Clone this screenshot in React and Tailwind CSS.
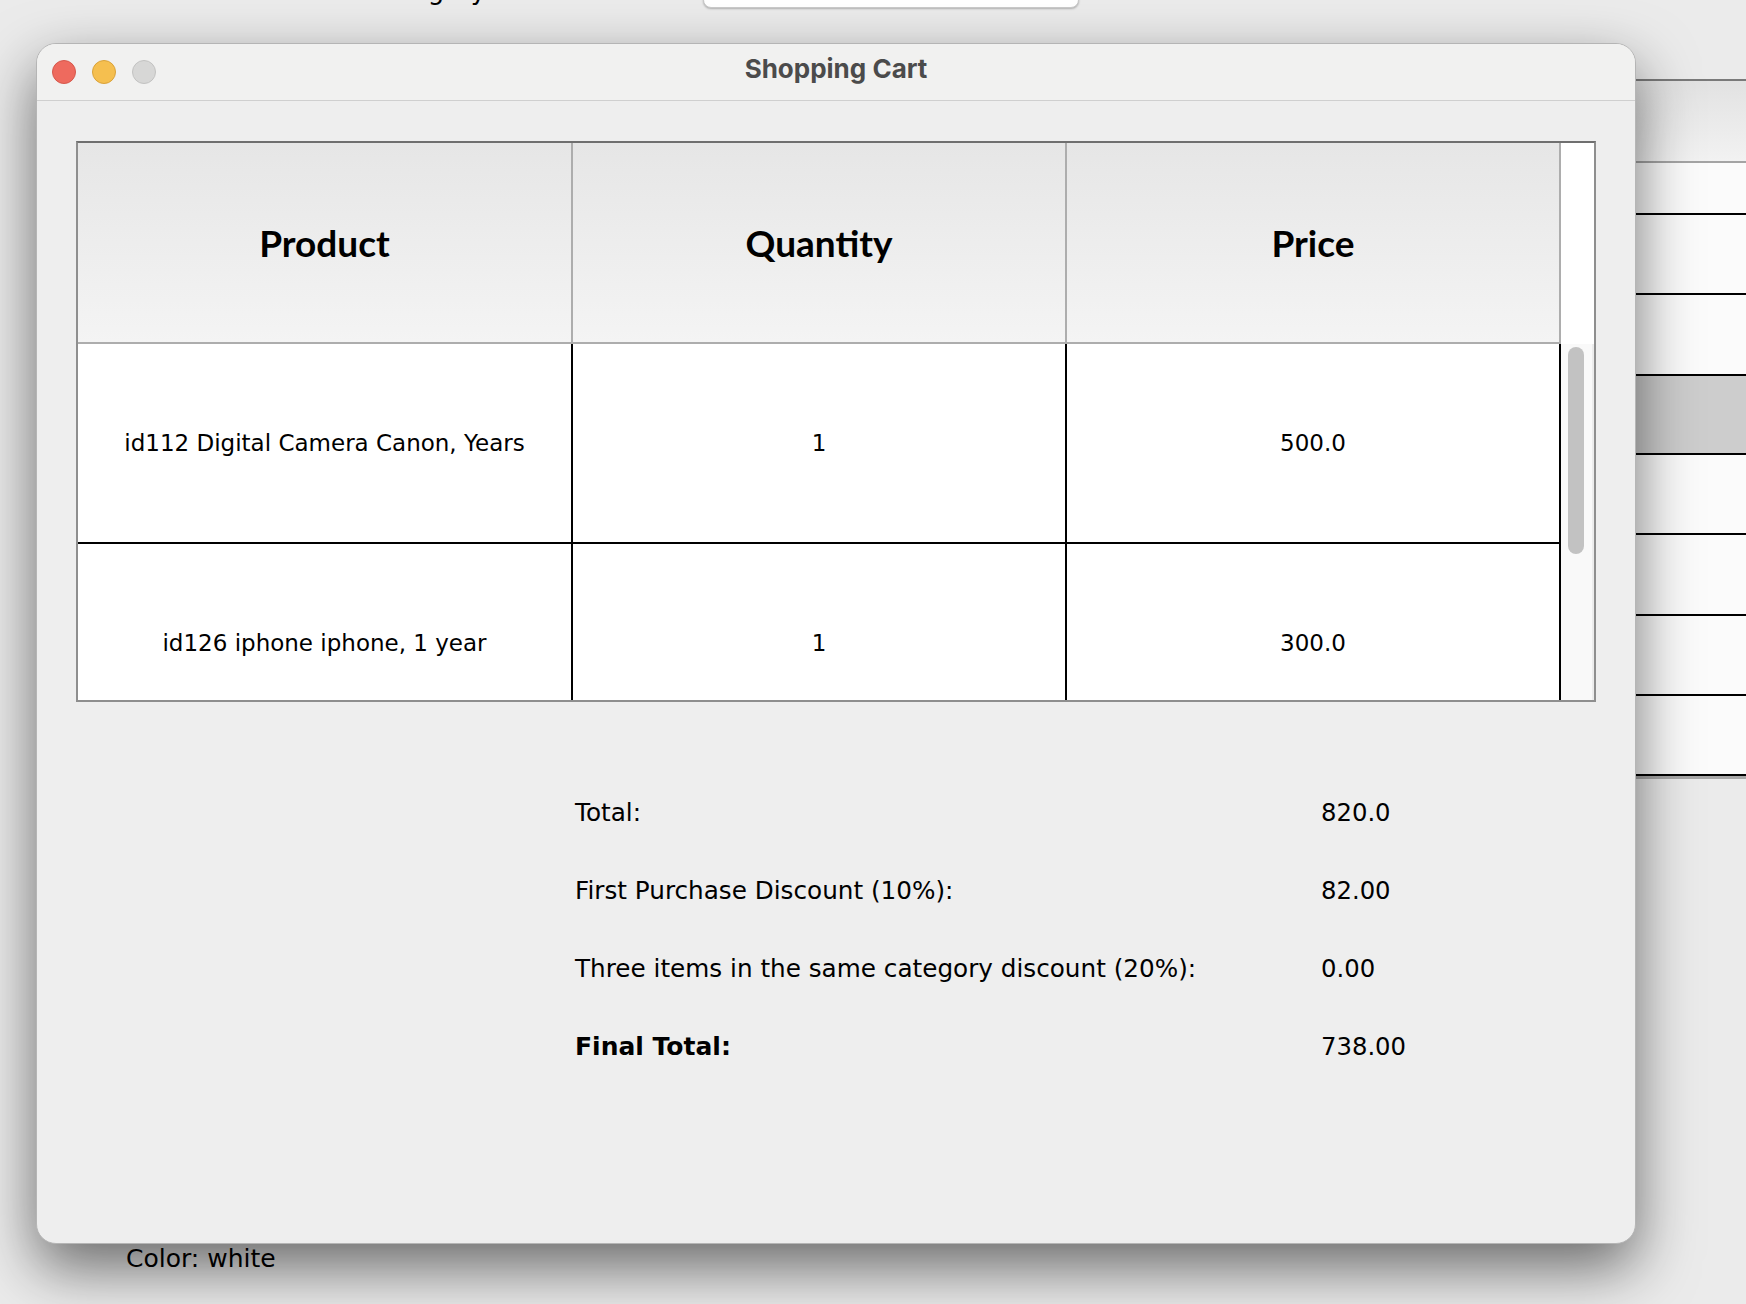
import React from 'react';

const cartRows = [
  { product: 'id112 Digital Camera Canon, Years', qty: '1', price: '500.0' },
  { product: 'id126 iphone iphone, 1 year', qty: '1', price: '300.0' },
];

const summary = [
  { label: 'Total:', value: '820.0' },
  { label: 'First Purchase Discount (10%):', value: '82.00' },
  { label: 'Three items in the same category discount (20%):', value: '0.00' },
  { label: 'Final Total:', value: '738.00', bold: true },
];

// rows of the product list window that sits behind the cart
const backRows = [
  { h: 'h-[52px]' },
  { h: 'h-[80px]' },
  { h: 'h-[81px]' },
  { h: 'h-[79px]', selected: true },
  { h: 'h-[80px]' },
  { h: 'h-[81px]' },
  { h: 'h-[80px]' },
  { h: 'h-[80px]' },
];

const BackWindow = () => (
  <>
    {/* cut off label + field at the very top */}
    <div className="absolute left-[172px] top-[-25px] font-['DejaVu_Sans',sans-serif] text-[26px] leading-[30px] text-black">
      Select Product Category
    </div>
    <div className="absolute left-[703px] top-[-20px] w-[376px] h-[28px] bg-white rounded-b-[8px] border border-[#c9c9c9] shadow-[0_1px_2px_rgba(0,0,0,0.25)]" />

    {/* product list table peeking out on the right */}
    <div className="absolute left-[1480px] top-[79px] w-[300px] flex flex-col">
      <div className="h-[84px] border-t-2 border-b-2 border-t-[#7a7a7a] border-b-[#a4a4a4] bg-gradient-to-b from-[#e2e2e2] to-[#f2f2f2]" />
      {backRows.map((r, i) => (
        <div
          key={i}
          className={`${r.h} border-b-2 border-black ${r.selected ? 'bg-[#cdcdcd]' : 'bg-[#fbfbfb]'}`}
        />
      ))}
      <div className="h-[3px] bg-[#a8a8a8]" />
    </div>

    <div className="absolute left-[126px] top-[1240px] font-['DejaVu_Sans',sans-serif] text-[25px] text-black">
      Color: white
    </div>
  </>
);

const TrafficLights = () => (
  <div className="flex items-center gap-[16px]">
    <div className="w-[24px] h-[24px] rounded-full bg-[#ee6a5e] border border-[#d5584c]" />
    <div className="w-[24px] h-[24px] rounded-full bg-[#f5bf4f] border border-[#d9a23a]" />
    <div className="w-[24px] h-[24px] rounded-full bg-[#d7d7d6] border border-[#c2c2c1]" />
  </div>
);

const CartTable = () => (
  <div className="w-[1520px] h-[561px] border-2 border-[#8e8e8e] border-t-[#6f6f6f] flex flex-col overflow-hidden">
    {/* header */}
    <div className="flex h-[201px] shrink-0">
      {['Product', 'Quantity', 'Price'].map((h, i) => (
        <div
          key={h}
          className={`${i === 0 ? 'w-[495px]' : 'w-[494px]'} h-full flex items-center justify-center border-r-2 border-b-2 border-[#adadad] bg-gradient-to-b from-[#e6e6e6] to-[#f4f4f4] font-['Lato',sans-serif] font-bold text-[37px] text-black`}
        >
          {h}
        </div>
      ))}
      <div className="flex-1 bg-white" />
    </div>

    {/* body */}
    <div className="flex flex-1 overflow-hidden">
      <div className="flex flex-col">
        {cartRows.map((r) => (
          <div key={r.product} className="flex h-[200px] shrink-0 bg-white font-['DejaVu_Sans',sans-serif] text-[23px] text-black">
            <div className="w-[495px] flex items-center justify-center border-r-2 border-b-2 border-black">{r.product}</div>
            <div className="w-[494px] flex items-center justify-center border-r-2 border-b-2 border-black">{r.qty}</div>
            <div className="w-[494px] flex items-center justify-center border-r-2 border-b-2 border-black">{r.price}</div>
          </div>
        ))}
      </div>
      <div className="flex-1 bg-[#f9f9f9] border-r-2 border-[#ececec] pl-[7px] pt-[3px]">
        <div className="w-[16px] h-[207px] rounded-full bg-[#c2c2c2]" />
      </div>
    </div>
  </div>
);

const Summary = () => (
  <div className="ml-[499px] mt-[72px] flex flex-col font-['DejaVu_Sans',sans-serif] text-black">
    {summary.map((s) => (
      <div key={s.label} className="flex items-center h-[78px]">
        <div className={`w-[746px] ${s.bold ? 'font-bold text-[25px]' : 'text-[24.7px]'}`}>{s.label}</div>
        <div className="text-[24.3px]">{s.value}</div>
      </div>
    ))}
  </div>
);

export default function App() {
  return (
    <div className="relative w-[1746px] h-[1304px] overflow-hidden bg-[#ebebeb]">
      <BackWindow />

      <div className="absolute left-[36px] top-[43px] w-[1600px] h-[1201px] rounded-[20px] bg-[#eeeeee] border border-[#b5b5b5] shadow-[0_24px_60px_rgba(0,0,0,0.55)] overflow-hidden flex flex-col">
        <div className="relative h-[57px] shrink-0 bg-[#f1f1f0] border-b border-[#cfcfcf] flex items-center pl-[15px]">
          <TrafficLights />
          <div className="absolute inset-x-0 top-0 h-full pb-[7px] flex items-center justify-center font-['Inter',sans-serif] font-bold text-[26px] text-[#4b4b4b] pointer-events-none">
            Shopping Cart
          </div>
        </div>

        <div className="flex flex-col pt-[40px] pl-[39px]">
          <CartTable />
          <Summary />
        </div>
      </div>
    </div>
  );
}
